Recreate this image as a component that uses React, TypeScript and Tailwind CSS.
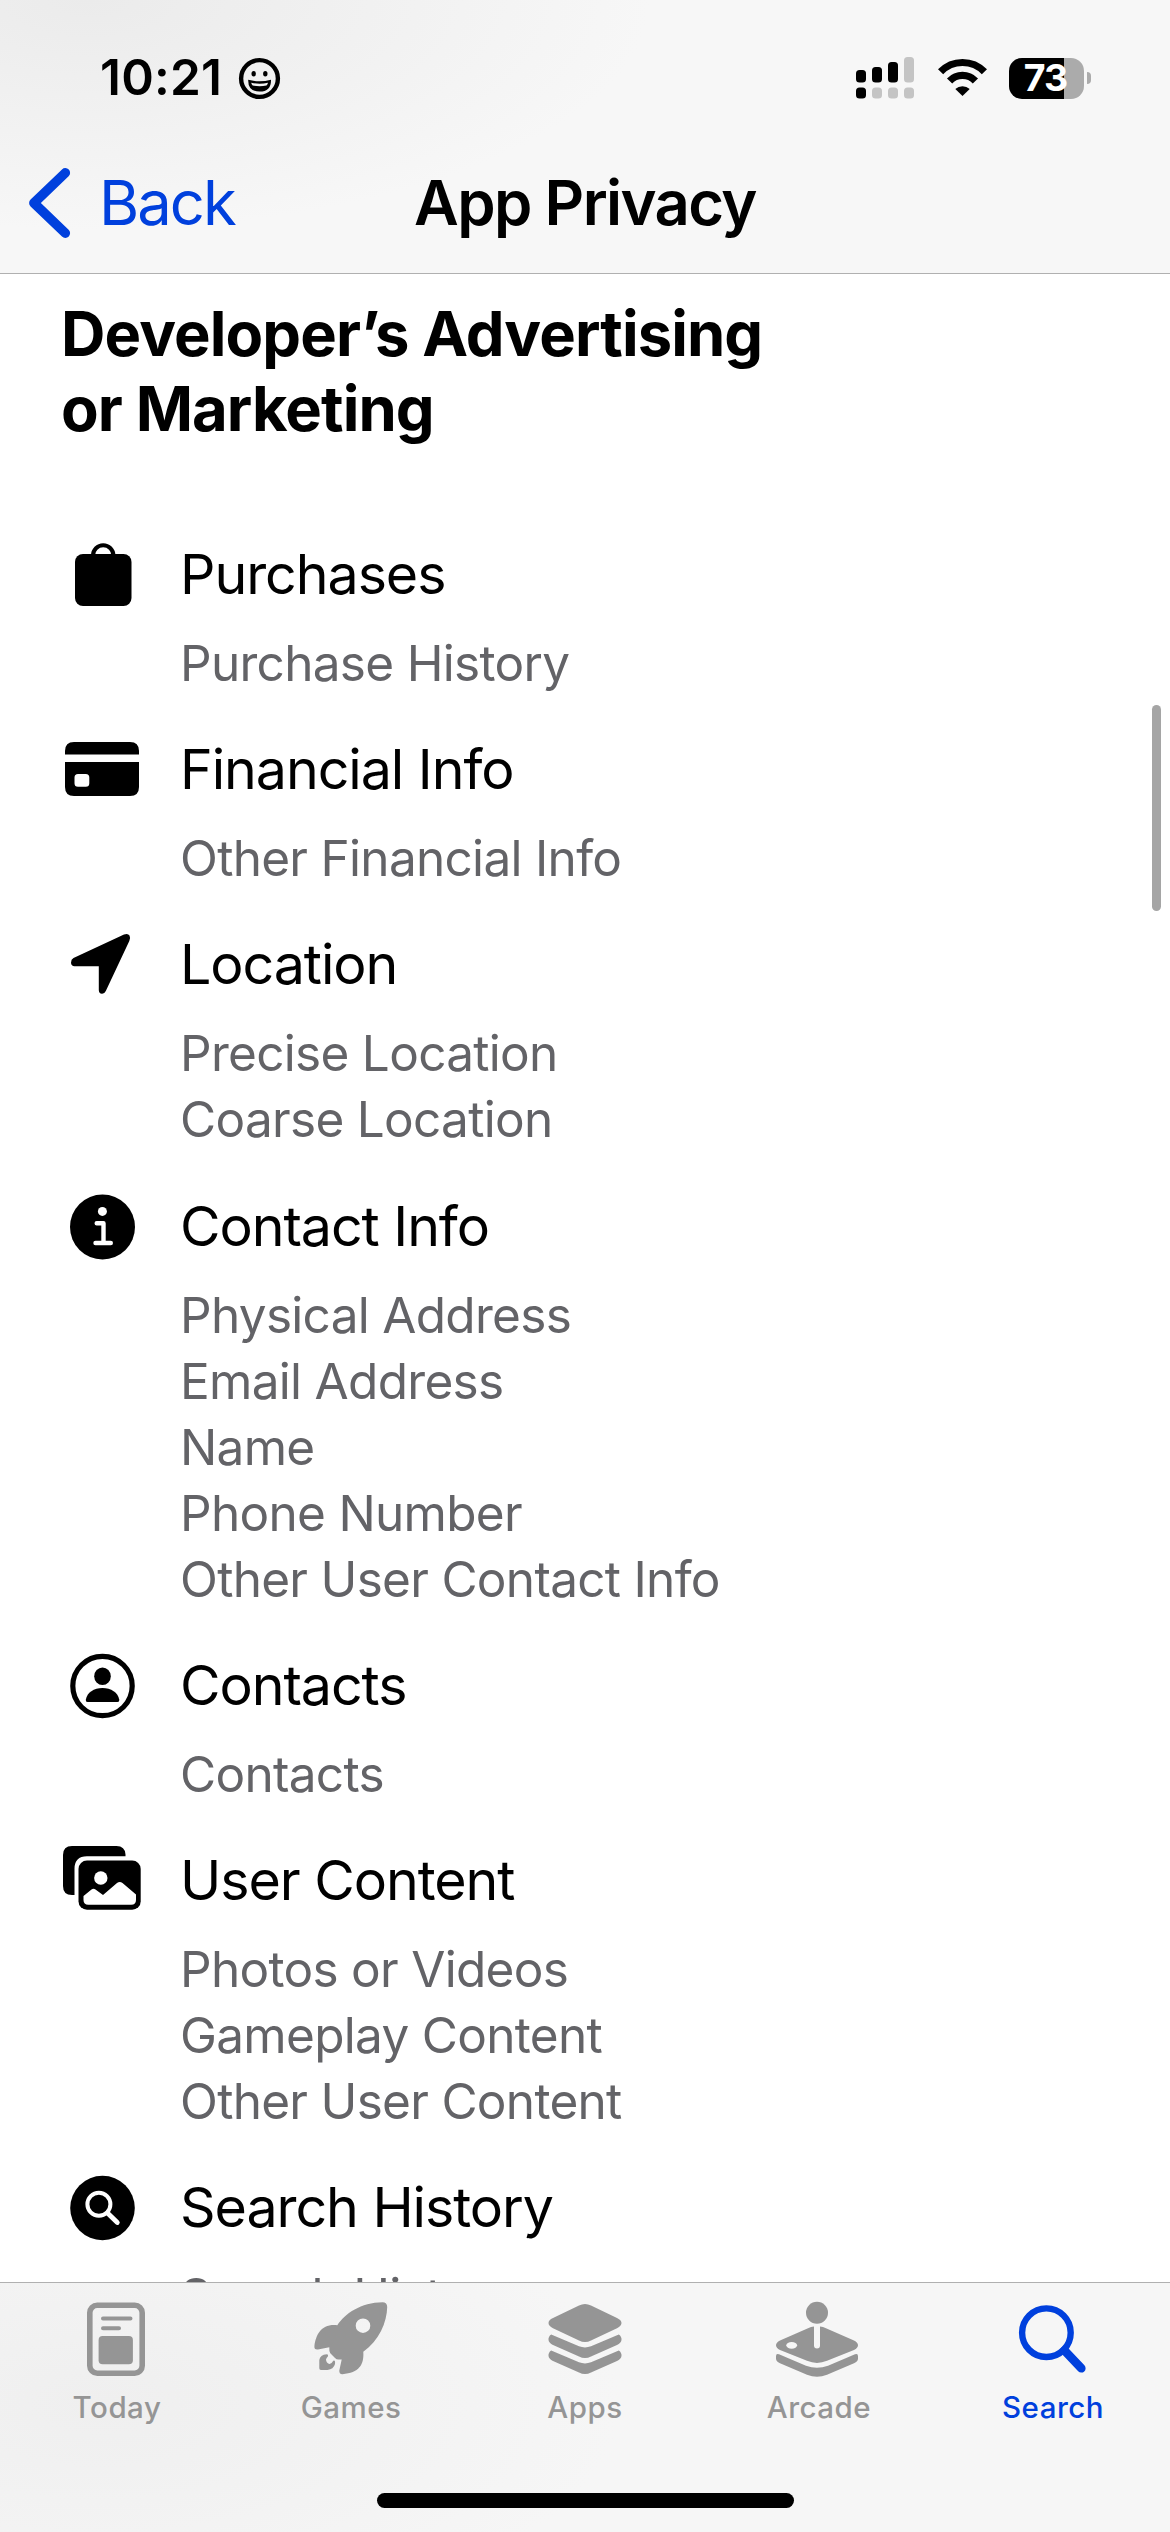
import type { ReactNode } from "react";

type Category = {
  title: string;
  icon: ReactNode;
  details: string[];
};

type Tab = {
  label: string;
  icon: ReactNode;
  active?: boolean;
};

const BagIcon = () => (
  <svg viewBox="0 0 84 84" className="h-[84px] w-[84px]">
    <path d="M33 24v-1.500a10.200 10.200 0 0 1 20.400 0V24" fill="none" stroke="#000" strokeWidth="4" />
    <rect x="15" y="21" width="56.500" height="52" rx="8" />
  </svg>
);

const CardIcon = () => (
  <svg viewBox="0 0 84 84" className="h-[84px] w-[84px]">
    <path d="M5 26.500V23q0-9 9-9h56q9 0 9 9v3.500z" />
    <path
      fillRule="evenodd"
      d="M5 34h74v25q0 9-9 9H14q-9 0-9-9zM18 46q-3.500 0-3.500 3.500v5.700q0 3.500 3.500 3.500h7.800q3.500 0 3.500-3.500v-5.700q0-3.500-3.500-3.500z"
    />
  </svg>
);

const LocationIcon = () => (
  <svg viewBox="0 0 84 84" className="h-[84px] w-[84px]">
    <path d="M13.500 35 64 11.500Q68 10 69.500 12.500 70.600 14 69.300 18L45.800 68Q44.500 70.900 42 70.800 38.800 70.500 38.800 67V43.200H14.500Q11.200 43 11 39.700 11 36.300 13.500 35z" />
  </svg>
);

const InfoIcon = () => (
  <svg viewBox="0 0 84 84" className="h-[84px] w-[84px]">
    <circle cx="42.500" cy="42" r="32.500" />
    <circle cx="42.400" cy="26.400" r="4.500" fill="#fff" />
    <path
      d="M36.700 38.200h6.800v19.700M35.500 58h15.300"
      fill="none"
      stroke="#fff"
      strokeWidth="4.400"
      strokeLinecap="round"
      strokeLinejoin="round"
    />
  </svg>
);

const PersonIcon = () => (
  <svg viewBox="0 0 84 84" className="h-[84px] w-[84px]">
    <circle cx="42.500" cy="42" r="29.700" fill="none" stroke="#000" strokeWidth="5.200" />
    <ellipse cx="42.500" cy="32.300" rx="8.300" ry="8.800" />
    <path d="M27.500 58q-2 0-1.700-2.300C27 48.500 34 44 42.500 44S58 48.500 59.300 55.700Q59.500 58 57.500 58z" />
  </svg>
);

const PhotosIcon = () => (
  <svg viewBox="0 0 84 84" className="h-[84px] w-[84px]">
    <path d="M3 16q0-9 9-9h44.500q8.500 0 9 8.500V17.200H27q-12.500 0-12.500 12.500V56H12q-9 0-9-9z" />
    <rect x="18.500" y="21.500" width="62.200" height="49.200" rx="8.500" />
    <circle cx="40.800" cy="39" r="6.700" fill="#fff" />
    <path
      d="M23.500 57 31.500 50.500Q33.500 49 35.500 50.500L43 56 57 44Q59.800 42 62.500 44L76 55.500V61q0 4.800-4.800 4.800H28.300q-4.800 0-4.800-4.800z"
      fill="#fff"
    />
  </svg>
);

const SearchCircleIcon = () => (
  <svg viewBox="0 0 84 84" className="h-[84px] w-[84px]">
    <circle cx="42.500" cy="42" r="32.300" />
    <g fill="none" stroke="#fff">
      <circle cx="38.900" cy="38.300" r="11.500" strokeWidth="4" />
      <path d="m47.500 47 9.800 9.500" strokeWidth="4.800" strokeLinecap="round" />
    </g>
  </svg>
);

const TodayIcon = () => (
  <svg viewBox="-4 -4 88 88" className="h-[88px] w-[88px]" fill="currentColor">
    <rect x="12.800" y="6.200" width="52.400" height="68" rx="7.500" fill="none" stroke="currentColor" strokeWidth="5.600" />
    <path d="M26 19.500h27.500M26 29.200h16" stroke="currentColor" strokeWidth="4" strokeLinecap="round" />
    <rect x="21.600" y="37" width="34.300" height="28.200" rx="4" />
  </svg>
);

const RocketIcon = () => (
  <svg viewBox="-4 -4 88 88" className="h-[88px] w-[88px]" fill="currentColor">
    <path
      fillRule="evenodd"
      d="M26.300 26.300C34 14.500 50 3.500 71.500 3.300Q76.200 3.300 76.200 8C76 23 68 42 52.300 52.700 53.200 66 48 73.500 31.500 75.200Q28 75.300 28.300 71.500L30.700 60.400 27.500 60.500Q25.500 60.500 24 59L19.300 54.200Q18 52.700 18.300 48.300L7 50.500Q3 51 3.400 47C5 35.500 10.500 24.500 26.300 26.300zM59.300 26.700a7.300 7.300 0 1 0-14.600 0 7.300 7.300 0 0 0 14.600 0z"
    />
    <path d="M15.700 55.300Q9 56 8.300 61v8.300Q8.300 71.300 10.500 71h6Q22.500 70.300 24 65 24.500 60.800 22.300 61.700 20.300 65.200 18.300 65 15 63.700 15 60.300 15.700 59 17 57.300 17.700 55.500 15.700 55.300z" />
  </svg>
);

const LayersIcon = () => (
  <svg viewBox="-4 -4 88 88" className="h-[88px] w-[88px]" fill="currentColor">
    <path d="M34 6.500q6-3 12 0L72 19q4.500 2.200 4.500 5T72 29.200L46 41.500q-6 3-12 0L8 29.200Q3.500 27 3.500 24T8 19z" />
    <path d="M6.200 35.500 34 47.300q6 2.200 12 0L73.800 35.500q3 2 2.700 5.500Q76 44.200 72 46L46 57.500q-6 3-12 0L8 46Q4 44.200 3.500 41 3.200 37.500 6.200 35.500z" />
    <path d="M6.200 51.500 34 63.300q6 2.200 12 0L73.800 51.500q3 2 2.700 5.500Q76 60.200 72 62L46 73.500q-6 3-12 0L8 62Q4 60.200 3.500 57 3.200 53.500 6.200 51.500z" />
  </svg>
);

const JoystickIcon = () => (
  <svg viewBox="-4 -4 88 88" className="h-[88px] w-[88px]" fill="currentColor">
    <circle cx="38" cy="13.700" r="11" />
    <path d="M29 29.300q3-1.500 6-1.700V46.500q0 3 3 3t3-3V27.600q3 .2 6 1.700L75 41.500q4 2 4 4.800t-4 4.700L48 61.800q-10 4.200-20 0L1 51q-4-2-4-4.700T1 41.500z" />
    <path d="M-3 57.300Q-3 54 0 55.300L27 66.700q11 4.200 22 0L76 55.300q3-1.300 3 2V59.500Q79 62.500 75 64.300L48 75.800q-10 4-20 0L1 64.300Q-3 62.500-3 59.500z" />
    <ellipse cx="12.700" cy="46.300" rx="5.400" ry="3.400" fill="#f6f6f6" />
  </svg>
);

const SearchIcon = () => (
  <svg viewBox="-4 -4 88 88" className="h-[88px] w-[88px]" fill="none" stroke="currentColor">
    <circle cx="33.400" cy="33.700" r="24.300" strokeWidth="6.400" />
    <path d="M51.500 51.500 68.300 69.300" strokeWidth="8.600" strokeLinecap="round" />
  </svg>
);

const categories: Category[] = [
  { title: "Purchases", icon: <BagIcon />, details: ["Purchase History"] },
  { title: "Financial Info", icon: <CardIcon />, details: ["Other Financial Info"] },
  { title: "Location", icon: <LocationIcon />, details: ["Precise Location", "Coarse Location"] },
  {
    title: "Contact Info",
    icon: <InfoIcon />,
    details: ["Physical Address", "Email Address", "Name", "Phone Number", "Other User Contact Info"],
  },
  { title: "Contacts", icon: <PersonIcon />, details: ["Contacts"] },
  {
    title: "User Content",
    icon: <PhotosIcon />,
    details: ["Photos or Videos", "Gameplay Content", "Other User Content"],
  },
  { title: "Search History", icon: <SearchCircleIcon />, details: ["Search History"] },
];

const tabs: Tab[] = [
  { label: "Today", icon: <TodayIcon /> },
  { label: "Games", icon: <RocketIcon /> },
  { label: "Apps", icon: <LayersIcon /> },
  { label: "Arcade", icon: <JoystickIcon /> },
  { label: "Search", icon: <SearchIcon />, active: true },
];

const StatusBar = () => (
  <div className="flex h-[156px] items-center justify-between pl-[100px] pr-[79px]">
    <div className="flex items-center gap-[16px]">
      <span className="text-[49.5px] font-semibold leading-none tracking-[0.2px]">10:21</span>
      <svg viewBox="0 0 43 43" className="h-[43px] w-[43px]">
        <circle cx="21.500" cy="21.500" r="18.400" fill="none" stroke="#000" strokeWidth="4.400" />
        <ellipse cx="15.700" cy="16.700" rx="2.200" ry="2.700" />
        <ellipse cx="27.300" cy="16.700" rx="2.200" ry="2.700" />
        <path d="M10.200 22.800q11.300 3 22.800 0Q33.300 34.500 21.600 34.500T10.200 22.800z" />
        <path d="M13.200 25.800q8.300 1.700 16.800 0-.3 1.700-1.500 2.600-6.900 1.500-13.800 0-1.200-.9-1.500-2.600z" fill="#f3f3f3" />
      </svg>
    </div>
    <div className="flex items-center">
      <svg viewBox="0 0 59 42" className="h-[42px] w-[59px]">
        <rect x="0" y="13" width="10" height="12.500" rx="3.500" />
        <rect x="16" y="10" width="10" height="15.500" rx="3.500" />
        <rect x="32" y="5" width="10" height="20.500" rx="3.500" />
        <rect x="48" y="0" width="10" height="25.500" rx="3.500" fill="#c4c4c4" />
        <rect x="0" y="30.500" width="10" height="11" rx="3.500" />
        <rect x="16" y="30.500" width="10" height="11" rx="3.500" fill="#c4c4c4" />
        <rect x="32" y="30.500" width="10" height="11" rx="3.500" fill="#c4c4c4" />
        <rect x="48" y="30.500" width="10" height="11" rx="3.500" fill="#c4c4c4" />
      </svg>
      <svg viewBox="0 0 52 40" className="ml-[22px] h-[40px] w-[52px]">
        <g fill="none" stroke="#000" strokeWidth="7.200">
          <path d="M3.600 13.800a30.400 30.400 0 0 1 43.800 0" />
          <path d="M12.600 22.900a17.800 17.800 0 0 1 25.800 0" />
        </g>
        <path d="M25.500 38 18.300 31a10.500 10.500 0 0 1 14.400 0z" />
      </svg>
      <div className="ml-[20px] flex h-[41px] w-[75px] items-center justify-center rounded-[13px] bg-[linear-gradient(90deg,#000_73.500%,#ababab_73.500%)] pr-[2px]">
        <span className="text-[37.5px] font-bold leading-none tracking-[-1px] text-white">73</span>
      </div>
      <div className="ml-[3px] h-[12px] w-[4px] rounded-r-full bg-[#ababab]" />
    </div>
  </div>
);

const NavBar = () => (
  <div className="grid h-[94px] grid-cols-[1fr_auto_1fr] items-center text-[61.5px] leading-none">
    <button className="flex items-center gap-[28px] pl-[29px] text-[#0040dd]">
      <svg viewBox="0 0 42 70" className="h-[70px] w-[42px]">
        <path
          d="M36.300 4.900 4.900 35l31.400 30.100"
          fill="none"
          stroke="currentColor"
          strokeWidth="9.600"
          strokeLinecap="round"
          strokeLinejoin="round"
        />
      </svg>
      <span className="tracking-[-2px]">Back</span>
    </button>
    <h1 className="font-semibold tracking-[-1.6px]">App Privacy</h1>
  </div>
);

const CategoryRow = ({ title, icon, details }: Category) => (
  <li>
    <div className="flex items-center">
      <div className="translate-y-px">{icon}</div>
      <h3 className="pl-[36px] text-[55.5px] leading-[84px] tracking-[-1.05px]">{title}</h3>
    </div>
    <ul className="mt-[14px] pl-[120px] text-[49.5px] leading-[66px] tracking-[-0.7px] text-[#636367]">
      {details.map((detail) => (
        <li key={detail}>{detail}</li>
      ))}
    </ul>
  </li>
);

const TabBar = () => (
  <footer className="h-[250px] shrink-0 border-t border-[#b0b0b0] bg-[#f6f6f6] bg-[radial-gradient(ellipse_520px_230px_at_100px_120px,#efefef,#f6f6f6)] pt-[12px]">
    <nav className="grid grid-cols-5">
      {tabs.map((tab) => (
        <button
          key={tab.label}
          className={`flex flex-col items-center gap-[6px] ${tab.active ? "text-[#0040dd]" : "text-[#959595]"}`}
        >
          {tab.icon}
          <span className="text-[29.5px] font-medium leading-[36px] tracking-[0.5px]">{tab.label}</span>
        </button>
      ))}
    </nav>
    <div className="mx-auto mt-[68px] h-[15px] w-[417px] rounded-full bg-black" />
  </footer>
);

const App = () => {
  return (
    <div className="relative flex h-[2532px] w-[1170px] flex-col overflow-hidden bg-white font-[Inter,'Liberation_Sans',sans-serif] text-black">
      <header className="h-[274px] shrink-0 border-b border-[#b0b0b0] bg-[#f7f7f7] bg-[radial-gradient(ellipse_560px_230px_at_90px_0px,#ebebeb,#f7f7f7)]">
        <StatusBar />
        <NavBar />
      </header>
      <main className="min-h-0 flex-1 overflow-hidden px-[60px] pt-[22px]">
        <h2 className="pl-px text-[61.5px] font-bold leading-[75px] tracking-[-0.9px]">
          Developer’s Advertising
          <br />
          or Marketing
        </h2>
        <ul className="mt-[86px] flex flex-col gap-[31.2px]">
          {categories.map((category) => (
            <CategoryRow key={category.title} {...category} />
          ))}
        </ul>
      </main>
      <TabBar />
      <div className="absolute right-[9px] top-[705px] h-[206px] w-[9px] rounded-full bg-[#a5a5a5]" />
    </div>
  );
};

export default App;
